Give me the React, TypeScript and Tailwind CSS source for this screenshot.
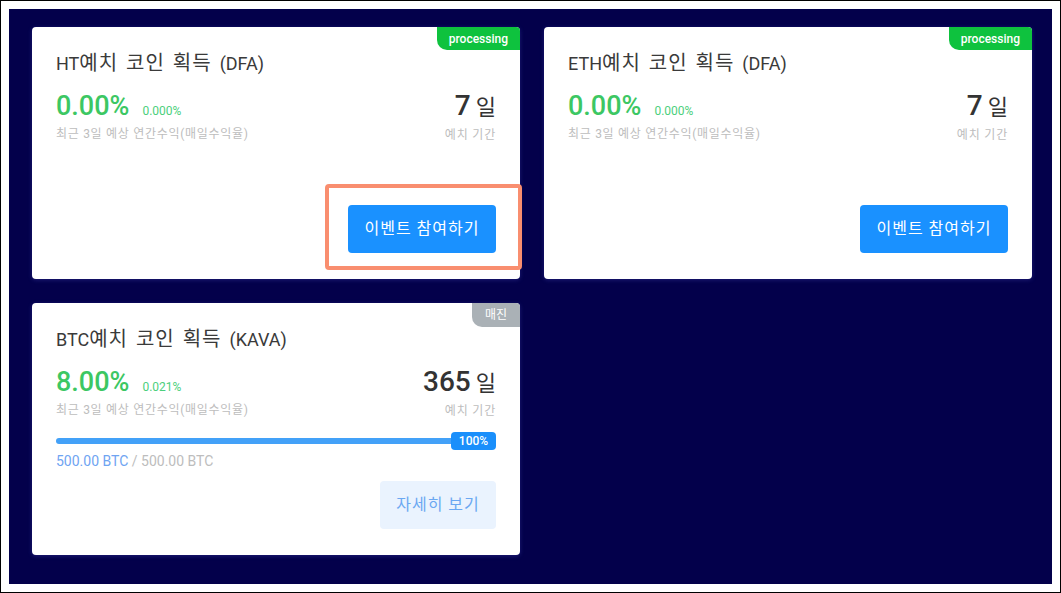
import React from "react";

type Deposit = {
  coin: string;
  token: string;
  rate: string;
  daily: string;
  days: string;
  badge: string;
  soldOut?: boolean;
};

const deposits: Deposit[] = [
  { coin: "HT", token: "DFA", rate: "0.00%", daily: "0.000%", days: "7", badge: "processing" },
  { coin: "ETH", token: "DFA", rate: "0.00%", daily: "0.000%", days: "7", badge: "processing" },
  { coin: "BTC", token: "KAVA", rate: "8.00%", daily: "0.021%", days: "365", badge: "매진", soldOut: true },
];

function DepositCard({ item, highlight }: { item: Deposit; highlight?: boolean }) {
  return (
    <div className="relative flex h-[252px] flex-col rounded bg-white px-6 pt-[23px] shadow-[0_1px_4px_rgba(80,80,200,0.35)]">
      {/* Status badge */}
      <div
        className={
          item.soldOut
            ? "absolute right-0 top-0 flex h-[24px] items-center rounded-bl-[10px] rounded-tr bg-[#aab1b6] px-[13px] text-xs text-white"
            : "absolute right-0 top-0 flex h-[23px] items-center rounded-bl-[10px] rounded-tr bg-[#0ec23e] px-3 text-xs font-medium text-white"
        }
      >
        {item.badge}
      </div>

      <h3 className="h-[26px] text-[18px] leading-[26px] text-[#3a3a3a]">
        {item.coin}
        <span className="text-[20px] leading-[26px] tracking-[1px] [word-spacing:2px]">예치 코인 획득 </span>({item.token})
      </h3>

      <div className="mt-[14px] flex items-start justify-between">
        <div>
          <div className="flex items-baseline gap-[13px]">
            <span className="text-[27px] font-medium leading-[32px] text-[#3cc763]">{item.rate}</span>
            <span className="text-xs text-[#4ccf7c]">{item.daily}</span>
          </div>
          <div className="mt-[4px] text-xs tracking-[0.7px] text-[#bdbdbd]">최근 3일 예상 연간수익(매일수익율)</div>
        </div>
        <div className="text-right">
          <div className="flex items-baseline justify-end gap-[5px] leading-[32px]">
            <span className="text-[28px] font-medium text-[#333]">{item.days}</span>
            <span className="text-[22px] text-[#333]">일</span>
          </div>
          <div className="mt-[3px] text-xs tracking-[0.8px] text-[#bdbdbd]">예치 기간</div>
        </div>
      </div>

      {item.soldOut && (
        <div className="mt-[13px]">
          <div className="relative flex h-[18px] items-center">
            <div className="h-[6px] w-full rounded-full bg-[#43a1f8]" />
            <div className="absolute right-0 top-0 flex h-[18px] w-[45px] items-center justify-center rounded-sm bg-[#1a8ffb] text-xs font-medium text-white">
              100%
            </div>
          </div>
          <div className="mt-[1px] text-[14px] text-[#bdbdbd]">
            <span className="text-[#6fa4f2]">500.00 BTC</span> / 500.00 BTC
          </div>
        </div>
      )}

      <div className="mt-auto flex justify-end pb-[26px]">
        {item.soldOut ? (
          <button className="h-[48px] w-[116px] rounded bg-[#eaf3fe] text-base tracking-[1px] text-[#6ba8f2]">자세히 보기</button>
        ) : (
          <button className="h-[48px] w-[148px] rounded bg-[#1a91ff] text-base tracking-[1px] text-white">이벤트 참여하기</button>
        )}
      </div>

      {highlight && (
        <div className="pointer-events-none absolute left-[293px] top-[157px] h-[86px] w-[197px] rounded-sm border-4 border-[#f98e6f]" />
      )}
    </div>
  );
}

export default function App() {
  return (
    <div
      className="box-border flex h-[593px] w-[1061px] flex-col border border-black bg-white p-[8px]"
      style={{ fontFamily: "Roboto, 'Noto Sans CJK KR', sans-serif" }}
    >
      <div className="flex-1 bg-[#03004b] pl-[23px] pt-[18px]">
        <div className="grid grid-cols-[488px_488px] gap-[24px]">
          {deposits.map((d, i) => (
            <DepositCard key={d.coin} item={d} highlight={i === 0} />
          ))}
        </div>
      </div>
    </div>
  );
}
